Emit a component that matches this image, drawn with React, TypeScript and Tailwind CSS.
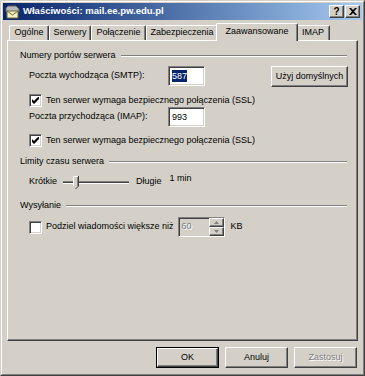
const raised =
  "border border-t-white border-l-white border-r-[#404040] border-b-[#404040] shadow-[inset_-1px_-1px_0_#808080]";
const sunken =
  "border border-t-[#808080] border-l-[#808080] border-r-white border-b-white shadow-[inset_1px_1px_0_#404040,inset_-1px_-1px_0_#d4d0c8]";

const tabs = [
  { label: "Ogólne", w: "w-[40px]" },
  { label: "Serwery", w: "w-[42px]" },
  { label: "Połączenie", w: "w-[55px]" },
  { label: "Zabezpieczenia", w: "w-[72px]" },
  { label: "Zaawansowane", w: "w-[82px]", active: true },
  { label: "IMAP", w: "w-[34px]" },
];

function Check({ checked }: { checked?: boolean }) {
  return (
    <div className={`w-[13px] h-[13px] shrink-0 bg-white flex items-center justify-center ${sunken}`}>
      {checked && (
        <svg width="7" height="7" viewBox="0 0 7 7">
          <path d="M0 2 L2 4 L6 0 L7 0 L7 2 L2 7 L0 5 Z" fill="black" />
        </svg>
      )}
    </div>
  );
}

function Header({ label }: { label: string }) {
  return (
    <div className="flex items-center h-[14px] pr-[10px]">
      <span>{label}</span>
      <div className="flex-1 ml-[5px] h-[2px] border-t border-t-[#808080] border-b border-b-white" />
    </div>
  );
}

function Field({ value, selected }: { value: string; selected?: boolean }) {
  return (
    <div className={`w-[37px] h-[20px] bg-white flex items-center pl-[3px] ${sunken}`}>
      <span className={selected ? "bg-[#0a246a] text-white leading-[12px]" : "leading-[12px]"}>{value}</span>
    </div>
  );
}

function Btn({ children, primary, disabled, w }: { children: string; primary?: boolean; disabled?: boolean; w: string }) {
  const inner = (
    <div className={`w-full h-full flex items-center justify-center bg-[#d4d0c8] ${raised}`}>
      <span className={disabled ? "text-[#808080] [text-shadow:1px_1px_0_#fff]" : ""}>{children}</span>
    </div>
  );
  return primary ? (
    <div className={`${w} h-[21px] border border-black`}>{inner}</div>
  ) : (
    <div className={`${w} h-[21px]`}>{inner}</div>
  );
}

export default function App() {
  return (
    <div className="w-[365px] h-[376px] bg-[#d4d0c8] font-['Liberation_Sans',Arial,sans-serif] text-[9px] text-black border border-t-[#d4d0c8] border-l-[#d4d0c8] border-r-[#404040] border-b-[#404040]">
      <div className="h-full flex flex-col border border-t-white border-l-white border-r-[#808080] border-b-[#808080] p-px">
        {/* title bar */}
        <div className="h-[17px] shrink-0 flex items-center bg-gradient-to-r from-[#0a246a] to-[#a6caf0] pl-[2px] pr-[2px]">
          <svg width="16" height="14" viewBox="0 0 16 14" className="shrink-0">
            <path d="M3 1 L11 1 L14 4 L14 7 L1 7 L1 3 Z" fill="#b8b8b8" stroke="#606060" strokeWidth="1" />
            <rect x="2" y="6" width="11" height="7" fill="#f4f0c0" stroke="#6a6a40" strokeWidth="1" />
            <path d="M2 6 L7.5 10 L13 6" fill="none" stroke="#6a6a40" strokeWidth="1" />
          </svg>
          <span className="ml-[2px] text-white font-bold text-[9.5px]">Właściwości: mail.ee.pw.edu.pl</span>
          <div className="ml-auto flex gap-[1px]">
            <div className={`w-[15px] h-[13px] bg-[#d4d0c8] flex items-center justify-center font-bold text-[10px] leading-none ${raised}`}>?</div>
            <div className={`w-[15px] h-[13px] bg-[#d4d0c8] flex items-center justify-center ${raised}`}>
              <svg width="8" height="7" viewBox="0 0 8 7">
                <path d="M0 0 L2 0 L4 2 L6 0 L8 0 L5 3.5 L8 7 L6 7 L4 5 L2 7 L0 7 L3 3.5 Z" fill="black" />
              </svg>
            </div>
          </div>
        </div>

        {/* tabs */}
        <div className="mt-[3px] ml-[6px] h-[17px] flex items-end">
          {tabs.map((t) => (
            <div
              key={t.label}
              className={
                t.active
                  ? `${t.w} h-[18px] -mb-px -mx-[2px] relative z-10 bg-[#d4d0c8] flex items-center justify-center pb-[2px] border-l border-t border-r border-l-white border-t-white border-r-[#404040] rounded-tl-[2px] rounded-tr-[2px] shadow-[inset_-1px_0_0_#808080]`
                  : `${t.w} h-[15px] bg-[#d4d0c8] flex items-center justify-center border-l border-t border-r border-l-white border-t-white border-r-[#404040] rounded-tl-[2px] rounded-tr-[2px] shadow-[inset_-1px_0_0_#808080]`
              }
            >
              {t.label}
            </div>
          ))}
        </div>

        {/* panel */}
        <div className={`mx-[4px] h-[301px] shrink-0 flex flex-col pl-[12px] ${raised}`}>
          <div className="mt-[8px]">
            <Header label="Numery portów serwera" />
          </div>

          <div className="mt-[3px] pl-[9px] flex items-center h-[20px]">
            <span className="w-[139px]">Poczta wychodząca (SMTP):</span>
            <Field value="587" selected />
            <div className="ml-[66px] w-[77px] h-[20px]">
              <Btn w="w-[77px]">Użyj domyślnych</Btn>
            </div>
          </div>

          <div className="mt-[8px] pl-[9px] flex items-center gap-[4px] h-[13px]">
            <Check checked />
            <span>Ten serwer wymaga bezpiecznego połączenia (SSL)</span>
          </div>

          <div className="pl-[9px] flex items-center h-[20px]">
            <span className="w-[139px]">Poczta przychodząca (IMAP):</span>
            <Field value="993" />
          </div>

          <div className="mt-[7px] pl-[9px] flex items-center gap-[4px] h-[13px]">
            <Check checked />
            <span>Ten serwer wymaga bezpiecznego połączenia (SSL)</span>
          </div>

          <div className="mt-[8px]">
            <Header label="Limity czasu serwera" />
          </div>

          <div className="mt-[3px] pl-[9px] flex items-center h-[20px]">
            <span className="w-[34px]">Krótkie</span>
            <svg width="66" height="16" viewBox="0 0 66 16" className="shrink-0">
              <line x1="0" y1="7.5" x2="66" y2="7.5" stroke="#808080" />
              <line x1="0" y1="8.5" x2="66" y2="8.5" stroke="#404040" />
              <line x1="0" y1="9.5" x2="66" y2="9.5" stroke="#ffffff" />
              <path d="M10 2 L15 2 L15 12 L12.5 14.5 L10 12 Z" fill="#d4d0c8" />
              <path d="M10.5 12 L10.5 2.5 L15 2.5" fill="none" stroke="#ffffff" />
              <path d="M15.5 2 L15.5 12 L12.5 15" fill="none" stroke="#404040" />
              <path d="M14.5 3 L14.5 12" fill="none" stroke="#808080" />
            </svg>
            <span className="ml-[7px]">Długie</span>
            <span className="ml-[8px] -mt-[6px]">1 min</span>
          </div>

          <div className="mt-[7px]">
            <Header label="Wysyłanie" />
          </div>

          <div className="mt-[4px] pl-[9px] flex items-center h-[20px]">
            <Check />
            <span className="ml-[4px]">Podziel wiadomości większe niż</span>
            <div className={`ml-[4px] w-[47px] h-[20px] bg-[#d4d0c8] flex items-center ${sunken}`}>
              <span className="flex-1 pl-[3px] text-[#808080] [text-shadow:1px_1px_0_#fff]">60</span>
              <div className="w-[15px] h-full flex flex-col">
                <div className={`flex-1 flex items-center justify-center ${raised}`}>
                  <svg width="5" height="3" viewBox="0 0 5 3">
                    <path d="M2.5 0 L5 3 L0 3 Z" fill="#808080" />
                  </svg>
                </div>
                <div className={`flex-1 flex items-center justify-center ${raised}`}>
                  <svg width="5" height="3" viewBox="0 0 5 3">
                    <path d="M0 0 L5 0 L2.5 3 Z" fill="#808080" />
                  </svg>
                </div>
              </div>
            </div>
            <span className="ml-[6px]">KB</span>
          </div>
        </div>

        {/* buttons */}
        <div className="mt-[6px] mr-[5px] flex justify-end gap-[6px]">
          <Btn w="w-[63px]" primary>OK</Btn>
          <Btn w="w-[63px]">Anuluj</Btn>
          <Btn w="w-[63px]" disabled>Zastosuj</Btn>
        </div>
      </div>
    </div>
  );
}
